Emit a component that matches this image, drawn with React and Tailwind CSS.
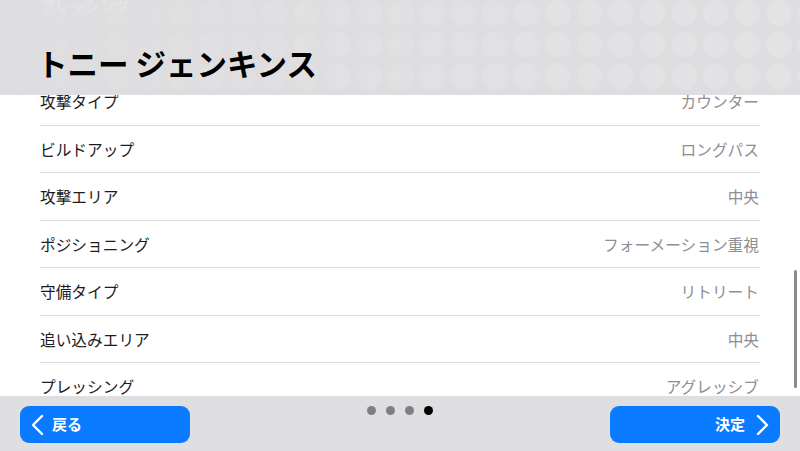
const rows = [
  { label: '攻撃タイプ', value: 'カウンター' },
  { label: 'ビルドアップ', value: 'ロングパス' },
  { label: '攻撃エリア', value: '中央' },
  { label: 'ポジショニング', value: 'フォーメーション重視' },
  { label: '守備タイプ', value: 'リトリート' },
  { label: '追い込みエリア', value: '中央' },
  { label: 'プレッシング', value: 'アグレッシブ' },
];

const font = { fontFamily: '"Noto Sans CJK JP", "Noto Sans", sans-serif' };

const DotPattern = () => (
  <svg className="absolute inset-0 w-full h-full" aria-hidden="true">
    <defs>
      <pattern id="dots" x="7" y="-2.5" width="31.5" height="31.5" patternUnits="userSpaceOnUse">
        <circle cx="15.75" cy="15.75" r="13" fill="#e4e4e6" />
      </pattern>
      <linearGradient id="fade" x1="0" y1="0" x2="1" y2="0">
        <stop offset="0" stopColor="#fff" stopOpacity="0.2" />
        <stop offset="0.4" stopColor="#fff" stopOpacity="0.4" />
        <stop offset="1" stopColor="#fff" stopOpacity="0.8" />
      </linearGradient>
      <mask id="fadeMask">
        <rect width="100%" height="100%" fill="url(#fade)" />
      </mask>
    </defs>
    <rect width="100%" height="100%" fill="url(#dots)" mask="url(#fadeMask)" />
  </svg>
);

const Chevron = ({ dir }) => (
  <svg width="13" height="22" viewBox="0 0 13 22" fill="none" aria-hidden="true">
    <polyline
      points={dir === 'left' ? '11,2 2,11 11,20' : '2,2 11,11 2,20'}
      stroke="currentColor"
      strokeWidth="2.4"
      strokeLinecap="round"
      strokeLinejoin="round"
    />
  </svg>
);

export default function App() {
  return (
    <div className="w-[800px] h-[451px] flex flex-col overflow-hidden bg-white" style={font}>
      {/* Header */}
      <header className="relative h-[95px] shrink-0 bg-[#dedee0] overflow-hidden">
        <DotPattern />
        <div className="relative pl-[40px] text-[15px] leading-[14px] -mt-[2px] text-[#e6e6e8]">プレッシング</div>
        <h1 className="relative pl-[37px] mt-[33px] text-[30.5px] leading-[36px] font-bold text-black">
          トニー ジェンキンス
        </h1>
      </header>

      {/* List */}
      <main className="relative flex-1 overflow-hidden">
        <ul className="-mt-[17px] px-[40px]">
          {rows.map((row) => (
            <li
              key={row.label}
              className="h-[47.5px] flex items-center justify-between border-b border-[#dcdcdc] pt-[2px] text-[15.7px]"
            >
              <span className="text-[#1c1c1e]">{row.label}</span>
              <span className="text-[#8e8e93] pr-[1px]">{row.value}</span>
            </li>
          ))}
        </ul>
        <div className="absolute right-[3px] top-[175px] w-[3px] h-[118px] rounded-full bg-[#8a8a8a]" />
      </main>

      {/* Footer */}
      <footer className="h-[55px] shrink-0 bg-[#dfdfe1] flex items-start justify-between px-[20px] pt-[10px]">
        <button className="w-[170px] h-[37px] rounded-[9px] bg-[#0a7bff] text-white flex items-center pl-[11px] gap-[8px] text-[15px] font-bold">
          <Chevron dir="left" />
          <span>戻る</span>
        </button>
        <div className="flex gap-[10px] -mt-[0.5px]">
          <span className="w-[9px] h-[9px] rounded-full bg-[#7f7f82]" />
          <span className="w-[9px] h-[9px] rounded-full bg-[#7f7f82]" />
          <span className="w-[9px] h-[9px] rounded-full bg-[#7f7f82]" />
          <span className="w-[9px] h-[9px] rounded-full bg-black" />
        </div>
        <button className="w-[170px] h-[37px] rounded-[9px] bg-[#0a7bff] text-white flex items-center justify-end pr-[11px] gap-[11px] text-[15px] font-bold">
          <span>決定</span>
          <Chevron dir="right" />
        </button>
      </footer>
    </div>
  );
}
